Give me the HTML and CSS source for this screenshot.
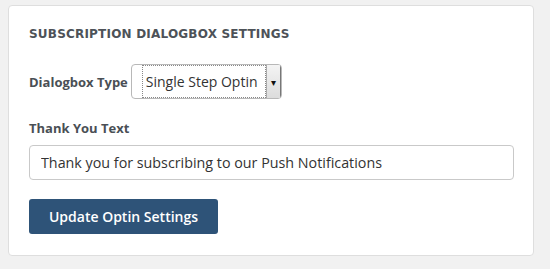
FILE: index.html
```html
<!DOCTYPE html>
<html lang="en">
<head>
    <meta charset="UTF-8">
    <meta name="viewport" content="width=device-width, initial-scale=1.0">
    <title>Subscription Dialogbox Settings</title>
    <link rel="stylesheet" href="styles.css">
</head>
<body>
    <div class="card">
        <h3 class="card-title">Subscription Dialogbox Settings</h3>

        <div class="row-inline">
            <label for="dialogType" class="field-label">Dialogbox Type</label>
            <span class="select-box">
                <select id="dialogType">
                    <option value="single">Single Step Optin</option>
                    <option value="double">Double Step Optin</option>
                </select>
                <span class="select-arrow">&#9662;</span>
            </span>
        </div>

        <div class="row-block">
            <label for="thankText" class="field-label">Thank You Text</label>
            <input type="text" id="thankText" value="Thank you for subscribing to our Push Notifications">
        </div>

        <button type="button" class="btn-primary">Update Optin Settings</button>
    </div>
</body>
</html>
```

FILE: styles.css
```css
body {
    margin: 0;
    padding: 5px 16px 0 8px;
    background-color: #f1f1f1;
    font-family: "Open Sans", Arial, sans-serif;
    color: #444;
}
.card {
    background-color: #fff;
    border: 1px solid #dedede;
    border-radius: 4px;
    padding: 20px 20px 20px 20px;
    height: 209px;
}
.card-title {
    margin: 0;
    font-family: "DejaVu Sans", sans-serif;
    font-size: 12px;
    line-height: 16px;
    font-weight: bold;
    letter-spacing: 0.2px;
    text-transform: uppercase;
    color: #4d5258;
}
.row-inline {
    display: flex;
    align-items: center;
    margin-top: 22px;
}
.field-label {
    font-size: 13px;
    font-weight: 700;
    color: #4a4f55;
}
.row-inline .field-label {
    margin-right: 3px;
}
.select-box {
    display: inline-flex;
    height: 35px;
    border: 1px solid #b8b8b8;
    border-radius: 4px;
    background: #fff;
    box-sizing: border-box;
    padding-left: 10px;
    overflow: hidden;
}
.select-box select {
    appearance: none;
    -webkit-appearance: none;
    border: 1px dotted #888;
    background: #fff;
    font-family: "Open Sans", Arial, sans-serif;
    font-size: 14px;
    color: #333;
    padding: 0 3px;
    width: 124px;
    outline: none;
}
.select-arrow {
    width: 13px;
    background: linear-gradient(#f4f4f4, #dcdcdc);
    border-left: 1px solid #aaa;
    border-right: 1px solid #777;
    font-size: 10px;
    color: #111;
    display: flex;
    align-items: center;
    justify-content: center;
}
.row-block {
    margin-top: 20px;
}
.row-block .field-label {
    display: block;
    margin-bottom: 8px;
}
.row-block input {
    display: block;
    box-sizing: border-box;
    width: 485px;
    height: 35px;
    border: 1px solid #c9c9c9;
    border-radius: 4px;
    padding: 0 11px;
    font-family: "Open Sans", Arial, sans-serif;
    font-size: 14.3px;
    color: #333;
}
.btn-primary {
    margin-top: 19px;
    background-color: #2e5378;
    color: #fff;
    border: none;
    border-radius: 3px;
    height: 35px;
    width: 189px;
    font-family: "Open Sans", Arial, sans-serif;
    font-size: 14px;
    font-weight: 600;
    cursor: pointer;
}
```
